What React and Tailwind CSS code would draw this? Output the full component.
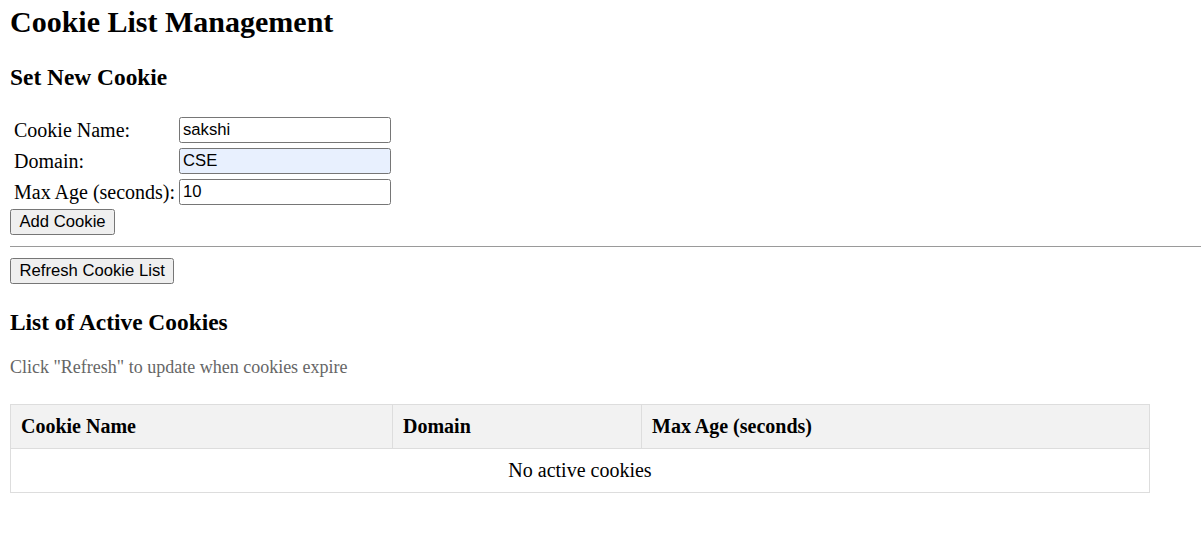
import React, { useState } from "react";

const serif = "font-['Liberation_Serif','Times_New_Roman',serif]";
const sans = "font-['Liberation_Sans',Arial,sans-serif]";

const App = () => {
  const [form, setForm] = useState({ name: "sakshi", domain: "CSE", maxAge: "10" });
  const [cookies] = useState([]);

  const handleChange = (e) => {
    const { name, value } = e.target;
    setForm({ ...form, [name]: value });
  };

  const fields = [
    { label: "Cookie Name:", name: "name", autofill: false },
    { label: "Domain:", name: "domain", autofill: true },
    { label: "Max Age (seconds):", name: "maxAge", autofill: false },
  ];

  return (
    <div className={`${serif} min-h-[557px] bg-white pl-[10px] pt-[5px] text-black`}>
      <h1 className="text-[30px] font-bold leading-[34px]">Cookie List Management</h1>

      <h3 className="mt-[24.5px] text-[23.4px] font-bold leading-[27px]">Set New Cookie</h3>

      <div className="mt-[26.5px] grid grid-cols-[161px_212px] gap-x-[4px] gap-y-[5px] pl-[4px]">
        {fields.map((f) => (
          <React.Fragment key={f.name}>
            <label className="flex h-[26px] items-center text-[20px] leading-[23px] whitespace-nowrap">
              {f.label}
            </label>
            <input
              name={f.name}
              value={form[f.name]}
              onChange={handleChange}
              className={`${sans} h-[26px] w-[212px] rounded-[2.5px] border border-[#767676] px-[3px] text-[16.67px] outline-none ${
                f.autofill ? "bg-[#e8f0fe]" : "bg-white"
              }`}
            />
          </React.Fragment>
        ))}
      </div>

      <button
        className={`${sans} mt-[4px] block h-[26px] rounded-[2.5px] border border-[#767676] bg-[#efefef] px-[8.5px] text-[16.67px] leading-none`}
      >
        Add Cookie
      </button>

      <hr className="mt-[11px] border-0 border-t border-[#9a9a9a]" />

      <button
        className={`${sans} mt-[11px] block h-[26px] rounded-[2.5px] border border-[#767676] bg-[#efefef] px-[8.5px] text-[16.67px] leading-none`}
      >
        Refresh Cookie List
      </button>

      <h3 className="mt-[24.5px] text-[23.4px] font-bold leading-[27px]">List of Active Cookies</h3>

      <p className="mt-[21px] text-[18px] leading-[21px] text-[#666]">
        Click "Refresh" to update when cookies expire
      </p>

      <table className="mt-[26.5px] w-[1140px] border-collapse text-[20px] leading-[23px]">
        <thead>
          <tr className="h-[44px] bg-[#f2f2f2]">
            <th className="w-[382px] border border-[#ddd] px-[10px] text-left font-bold">Cookie Name</th>
            <th className="w-[249px] border border-[#ddd] px-[10px] text-left font-bold">Domain</th>
            <th className="border border-[#ddd] px-[10px] text-left font-bold">Max Age (seconds)</th>
          </tr>
        </thead>
        <tbody>
          {cookies.length === 0 ? (
            <tr className="h-[44px]">
              <td colSpan={3} className="border border-[#ddd] px-[10px] text-center">
                No active cookies
              </td>
            </tr>
          ) : (
            cookies.map((c) => (
              <tr key={c.name} className="h-[44px]">
                <td className="border border-[#ddd] px-[10px]">{c.name}</td>
                <td className="border border-[#ddd] px-[10px]">{c.domain}</td>
                <td className="border border-[#ddd] px-[10px]">{c.maxAge}</td>
              </tr>
            ))
          )}
        </tbody>
      </table>
    </div>
  );
};

export default App;
